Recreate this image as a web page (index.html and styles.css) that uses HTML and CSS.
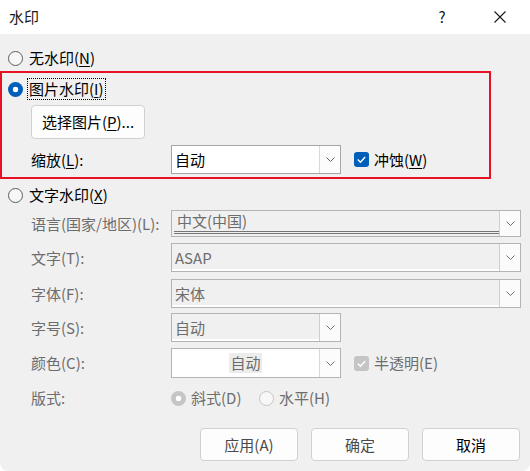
FILE: index.html
```html
<!DOCTYPE html>
<html lang="zh-CN">
<head>
<meta charset="utf-8">
<title>水印</title>
<link rel="stylesheet" href="styles.css">
</head>
<body>
<div class="dialog">
  <div class="titlebar">
    <span class="title">水印</span>
    <span class="help">?</span>
    <span class="close"><svg width="12" height="12" viewBox="0 0 12 12"><path d="M0.5 0.5L11.5 11.5M11.5 0.5L0.5 11.5" stroke="#1a1a1a" stroke-width="1.1" fill="none"/></svg></span>
  </div>

  <div class="opt opt-none"><span class="radio"></span><span class="lbl">无水印(<u>N</u>)</span></div>

  <div class="redbox">
    <div class="opt opt-pic"><span class="radio checked"></span><span class="lbl focus">图片水印(<u>I</u>)</span></div>
    <button class="btn-pick">选择图片(<u>P</u>)...</button>
    <div class="scale-row">
      <span class="flabel en">缩放(<u>L</u>):</span>
      <div class="combo short">
        <span class="field">自动</span>
        <span class="drop"><svg width="9" height="5" viewBox="0 0 9 5"><polyline points="0.5,0.5 4.5,4.5 8.5,0.5" stroke="#606060" stroke-width="1" fill="none"/></svg></span>
      </div>
      <span class="check on"><svg width="15" height="15" viewBox="0 0 15 15"><polyline points="3.8,7.6 6.4,10.2 11.2,5" stroke="#fff" stroke-width="1.4" fill="none"/></svg></span>
      <span class="clabel">冲蚀(<u>W</u>)</span>
    </div>
  </div>

  <div class="opt opt-text"><span class="radio"></span><span class="lbl">文字水印(<u>X</u>)</span></div>

  <div class="form">
    <div class="frow r-lang">
      <span class="flabel">语言(国家/地区)(L):</span>
      <div class="combo dis long">
        <span class="field lang"><span class="ftxt">中文(中国)</span></span>
        <span class="drop"><svg width="9" height="5" viewBox="0 0 9 5"><polyline points="0.5,0.5 4.5,4.5 8.5,0.5" stroke="#707070" stroke-width="1" fill="none"/></svg></span>
      </div>
    </div>
    <div class="frow r-text">
      <span class="flabel">文字(T):</span>
      <div class="combo dis long">
        <span class="field">ASAP</span>
        <span class="drop"><svg width="9" height="5" viewBox="0 0 9 5"><polyline points="0.5,0.5 4.5,4.5 8.5,0.5" stroke="#707070" stroke-width="1" fill="none"/></svg></span>
      </div>
    </div>
    <div class="frow r-font">
      <span class="flabel">字体(F):</span>
      <div class="combo dis long">
        <span class="field">宋体</span>
        <span class="drop"><svg width="9" height="5" viewBox="0 0 9 5"><polyline points="0.5,0.5 4.5,4.5 8.5,0.5" stroke="#707070" stroke-width="1" fill="none"/></svg></span>
      </div>
    </div>
    <div class="frow r-size">
      <span class="flabel">字号(S):</span>
      <div class="combo dis short">
        <span class="field">自动</span>
        <span class="drop"><svg width="9" height="5" viewBox="0 0 9 5"><polyline points="0.5,0.5 4.5,4.5 8.5,0.5" stroke="#707070" stroke-width="1" fill="none"/></svg></span>
      </div>
    </div>
    <div class="frow r-color">
      <span class="flabel">颜色(C):</span>
      <div class="combo short colorc">
        <span class="field center"><span class="swatch">自动</span></span>
        <span class="drop"><svg width="9" height="5" viewBox="0 0 9 5"><polyline points="0.5,0.5 4.5,4.5 8.5,0.5" stroke="#707070" stroke-width="1" fill="none"/></svg></span>
      </div>
      <span class="check off"><svg width="15" height="15" viewBox="0 0 15 15"><polyline points="3.8,7.6 6.4,10.2 11.2,5" stroke="#fff" stroke-width="1.4" fill="none"/></svg></span>
      <span class="clabel dtxt">半透明(E)</span>
    </div>
    <div class="frow r-layout">
      <span class="flabel">版式:</span>
      <span class="ropt first"><span class="radio dchecked"></span><span class="rtxt">斜式(D)</span></span>
      <span class="ropt"><span class="radio dis"></span><span class="rtxt">水平(H)</span></span>
    </div>
  </div>

  <div class="btns">
    <button class="btn gray">应用(A)</button>
    <button class="btn gray">确定</button>
    <button class="btn">取消</button>
  </div>
</div>
</body>
</html>
```

FILE: styles.css
```css
html, body {
  margin: 0;
  padding: 0;
  background: #ffffff;
}
body {
  width: 530px;
  height: 471px;
  overflow: hidden;
  font-family: "Noto Sans CJK SC", "Noto Sans", sans-serif;
  font-size: 15px;
  line-height: 20px;
  color: #000;
}
.dialog {
  width: 530px;
  height: 471px;
  background: #f0f0f0;
  border-radius: 0 0 8px 8px;
  overflow: hidden;
}
.titlebar {
  height: 34px;
  background: #fff;
  display: flex;
  align-items: center;
}
.title {
  flex: 1;
  padding-left: 9px;
  color: #1a1a1a;
}
.help {
  width: 40px;
  text-align: center;
  font-size: 15px;
  color: #1a1a1a;
}
.close {
  width: 40px;
  margin-left: 18px;
  margin-right: 10px;
  display: flex;
  justify-content: center;
  align-items: center;
}

u {
  text-decoration: underline;
  text-underline-offset: 2px;
  text-decoration-thickness: 1px;
}

.opt {
  display: flex;
  align-items: center;
  height: 20px;
  padding-left: 8px;
}
.opt-none { margin-top: 14px; }
.opt-text { margin-top: 6px; }
.radio {
  width: 15px;
  height: 15px;
  box-sizing: border-box;
  border: 1px solid #5c5c5c;
  border-radius: 50%;
  background: #f7f7f7;
  flex: none;
}
.radio.checked {
  border: none;
  background: radial-gradient(circle, #ffffff 0 2.6px, #005fb8 3.1px);
}
.radio.dchecked {
  border: none;
  background: radial-gradient(circle, #ffffff 0 2.6px, #c5c5c5 3.1px);
}
.radio.dis {
  border-color: #c5c5c5;
  background: #f7f7f7;
}
.lbl { margin-left: 6px; }
.lbl.focus {
  margin-left: 4px;
  padding: 0 1px;
  border: 1px dotted #000;
  line-height: 20px;
}

.redbox {
  margin-top: 3px;
  width: 491px;
  height: 108px;
  box-sizing: border-box;
  border: 2px solid #e81123;
}
.opt-pic {
  height: 22px;
  margin-top: 5px;
  padding-left: 6px;
}
.btn-pick {
  display: block;
  margin: 5px 0 0 29px;
  width: 114px;
  height: 34px;
  padding: 0;
  border: 1px solid #d0d0d0;
  border-radius: 4px;
  background: #fdfdfd;
  font: inherit;
  color: #000;
}
.scale-row {
  display: flex;
  align-items: center;
  margin-top: 6px;
  height: 29px;
  padding-left: 29px;
}

.flabel {
  width: 140px;
  flex: none;
  color: #6d6d6d;
}
.flabel.en { color: #000; }

.combo {
  display: flex;
  box-sizing: border-box;
  height: 100%;
  border: 1px solid #a5a5a5;
  background: #fff;
  flex: none;
}
.combo.short { width: 170px; }
.combo.long { width: 350px; }
.combo .field {
  flex: 1;
  display: flex;
  align-items: center;
  padding-left: 3px;
}
.combo .drop {
  width: 20px;
  flex: none;
  border-left: 1px solid #d9d9d9;
  background: #fcfcfc;
  display: flex;
  align-items: center;
  justify-content: center;
}
.combo.dis { border-color: #b4b4b4; }
.combo.dis .field {
  background: #f0f0f0;
  color: #6d6d6d;
  box-shadow: inset 0 -2px 0 #ffffff;
}
.combo.dis .drop {
  border-left-color: #cfcfcf;
  background: #fbfbfb;
}
.combo.dis .field.lang {
  box-shadow: none;
  align-items: stretch;
  padding-left: 0;
}
.field.lang .ftxt {
  flex: 1;
  display: flex;
  align-items: center;
  padding-left: 3px;
  margin: 0 0 2px 2px;
  border-bottom: 3px double #767676;
}
.combo.colorc { border-color: #b4b4b4; }
.field.center {
  justify-content: center;
  padding-left: 0;
}
.swatch {
  background: #ececec;
  color: #6d6d6d;
  padding: 0 1px;
  line-height: 20px;
}

.check {
  width: 15px;
  height: 15px;
  border-radius: 3px;
  margin-left: 13px;
  flex: none;
  display: flex;
}
.check.on { background: #005fb8; }
.check.off { background: #c5c5c5; }
.clabel { margin-left: 5px; }
.clabel.dtxt { color: #6d6d6d; }

.form { padding-left: 31px; }
.frow {
  display: flex;
  align-items: center;
}
.r-lang { margin-top: 5px; height: 27px; }
.r-text { margin-top: 6px; height: 29px; }
.r-font { margin-top: 7px; height: 29px; }
.r-size { margin-top: 5px; height: 29px; }
.r-color { margin-top: 6px; height: 30px; }
.r-layout { margin-top: 10px; height: 20px; }
.ropt {
  display: flex;
  align-items: center;
}
.ropt.first { width: 88px; }
.rtxt {
  margin-left: 5px;
  color: #6d6d6d;
}

.btns {
  display: flex;
  justify-content: flex-end;
  gap: 13px;
  padding-right: 10px;
  margin-top: 20px;
}
.btn {
  width: 98px;
  height: 33px;
  padding: 0;
  border: 1px solid #d0d0d0;
  border-radius: 4px;
  background: #fdfdfd;
  font: inherit;
  color: #000;
}
.btn.gray { color: #4a4a4a; }
```
